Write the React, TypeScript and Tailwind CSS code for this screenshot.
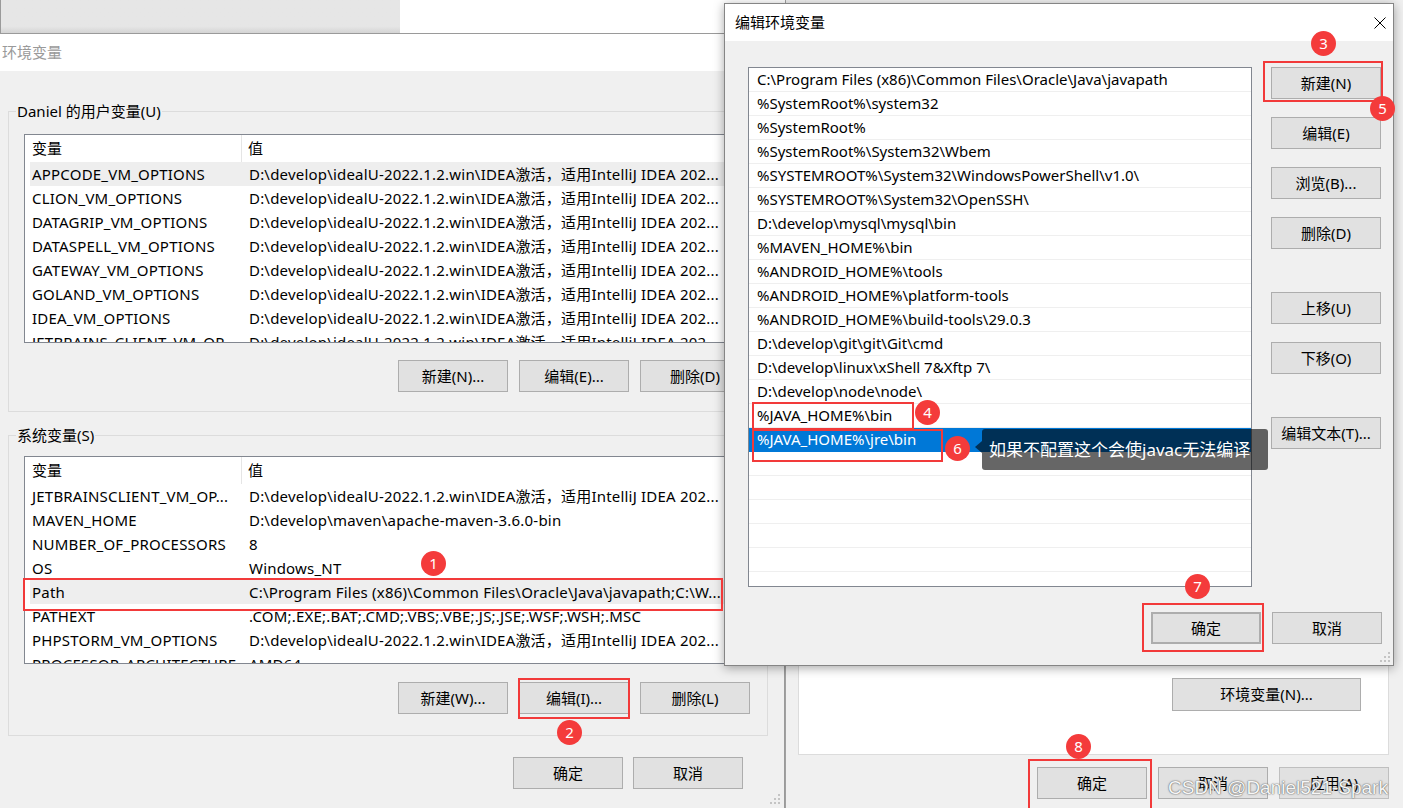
import React from "react";

const userVars: [string, string][] = [
  ["APPCODE_VM_OPTIONS", "D:\\develop\\idealU-2022.1.2.win\\IDEA激活，适用IntelliJ IDEA 202..."],
  ["CLION_VM_OPTIONS", "D:\\develop\\idealU-2022.1.2.win\\IDEA激活，适用IntelliJ IDEA 202..."],
  ["DATAGRIP_VM_OPTIONS", "D:\\develop\\idealU-2022.1.2.win\\IDEA激活，适用IntelliJ IDEA 202..."],
  ["DATASPELL_VM_OPTIONS", "D:\\develop\\idealU-2022.1.2.win\\IDEA激活，适用IntelliJ IDEA 202..."],
  ["GATEWAY_VM_OPTIONS", "D:\\develop\\idealU-2022.1.2.win\\IDEA激活，适用IntelliJ IDEA 202..."],
  ["GOLAND_VM_OPTIONS", "D:\\develop\\idealU-2022.1.2.win\\IDEA激活，适用IntelliJ IDEA 202..."],
  ["IDEA_VM_OPTIONS", "D:\\develop\\idealU-2022.1.2.win\\IDEA激活，适用IntelliJ IDEA 202..."],
  ["JETBRAINS_CLIENT_VM_OP...", "D:\\develop\\idealU-2022.1.2.win\\IDEA激活，适用IntelliJ IDEA 202..."],
];

const sysVars: [string, string][] = [
  ["JETBRAINSCLIENT_VM_OP...", "D:\\develop\\idealU-2022.1.2.win\\IDEA激活，适用IntelliJ IDEA 202..."],
  ["MAVEN_HOME", "D:\\develop\\maven\\apache-maven-3.6.0-bin"],
  ["NUMBER_OF_PROCESSORS", "8"],
  ["OS", "Windows_NT"],
  ["Path", "C:\\Program Files (x86)\\Common Files\\Oracle\\Java\\javapath;C:\\W..."],
  ["PATHEXT", ".COM;.EXE;.BAT;.CMD;.VBS;.VBE;.JS;.JSE;.WSF;.WSH;.MSC"],
  ["PHPSTORM_VM_OPTIONS", "D:\\develop\\idealU-2022.1.2.win\\IDEA激活，适用IntelliJ IDEA 202..."],
  ["PROCESSOR_ARCHITECTURE", "AMD64"],
];

const paths = [
  "C:\\Program Files (x86)\\Common Files\\Oracle\\Java\\javapath",
  "%SystemRoot%\\system32",
  "%SystemRoot%",
  "%SystemRoot%\\System32\\Wbem",
  "%SYSTEMROOT%\\System32\\WindowsPowerShell\\v1.0\\",
  "%SYSTEMROOT%\\System32\\OpenSSH\\",
  "D:\\develop\\mysql\\mysql\\bin",
  "%MAVEN_HOME%\\bin",
  "%ANDROID_HOME%\\tools",
  "%ANDROID_HOME%\\platform-tools",
  "%ANDROID_HOME%\\build-tools\\29.0.3",
  "D:\\develop\\git\\git\\Git\\cmd",
  "D:\\develop\\linux\\xShell 7&Xftp 7\\",
  "D:\\develop\\node\\node\\",
  "%JAVA_HOME%\\bin",
  "%JAVA_HOME%\\jre\\bin",
  "",
  "",
  "",
  "",
  "",
  "",
];

const Btn = ({
  children,
  className = "",
}: {
  children: React.ReactNode;
  className?: string;
}) => (
  <button
    type="button"
    className={`flex h-[32px] w-[110px] shrink-0 items-center justify-center border border-[#adadad] bg-[#e1e1e1] text-[15px] text-black ${className}`}
  >
    {children}
  </button>
);

const VarTable = ({
  rows,
  selected,
  className,
}: {
  rows: [string, string][];
  selected: number;
  className: string;
}) => (
  <div
    className={`ml-[15px] w-[730px] overflow-hidden border border-[#828790] bg-white ${className}`}
  >
    <div className="flex h-[27px] items-center">
      <div className="h-full w-[217px] shrink-0 border-r border-[#e5e5e5] pl-[7px] leading-[27px]">
        变量
      </div>
      <div className="pl-[6px]">值</div>
    </div>
    <div className="pl-[5px]">
      {rows.map(([k, v], i) => (
        <div
          key={k}
          className={`flex h-[24px] items-center whitespace-nowrap ${
            i === selected ? "bg-[#eeeeee]" : ""
          }`}
        >
          <div className="w-[212px] shrink-0 overflow-hidden pl-[2px] tracking-[0.2px]">{k}</div>
          <div className="pl-[7px] tracking-[0.2px]">{v}</div>
        </div>
      ))}
    </div>
  </div>
);

const Grip = () => (
  <svg width="11" height="11" viewBox="0 0 11 11">
    <rect x="8" y="0" width="2" height="2" fill="#c4c4c4" />
    <rect x="4" y="4" width="2" height="2" fill="#c4c4c4" />
    <rect x="8" y="4" width="2" height="2" fill="#c4c4c4" />
    <rect x="0" y="8" width="2" height="2" fill="#c4c4c4" />
    <rect x="4" y="8" width="2" height="2" fill="#c4c4c4" />
    <rect x="8" y="8" width="2" height="2" fill="#c4c4c4" />
  </svg>
);

const Badge = ({ n, className }: { n: number; className: string }) => (
  <div
    className={`absolute flex h-[25px] w-[25px] items-center justify-center rounded-full bg-[#f43b3b] text-[15px] leading-none text-white ${className}`}
  >
    {n}
  </div>
);

const Mark = ({ className }: { className: string }) => (
  <div className={`absolute border-2 border-[#f23a3a] ${className}`} />
);

export default function App() {
  return (
    <div className="relative h-[808px] w-[1403px] overflow-hidden bg-white font-['Noto_Sans','Noto_Sans_CJK_SC',sans-serif] text-[15px] text-black">
      {/* window behind, top left */}
      <div className="absolute left-0 top-0 h-[34px] w-[400px] border-b border-l border-[#9a9a9a] bg-gradient-to-b from-[#e6e6e6] from-80% to-[#d4d4d4]" />

      {/* 环境变量 dialog */}
      <div className="absolute left-0 top-[33px] flex h-[775px] w-[785px] flex-col border-r border-t border-[#9a9a9a] bg-[#f0f0f0]">
        <div className="h-[37px] shrink-0 bg-white pl-[2px] leading-[37px] text-[#9a9a9a]">
          环境变量
        </div>
        <div className="flex flex-col pl-[8px]">
          <fieldset className="mt-[30px] w-[760px] border border-[#dcdcdc] pb-[19px]">
            <legend className="ml-[7px] px-[1px] leading-[20px]">Daniel 的用户变量(U)</legend>
            <VarTable rows={userVars} selected={0} className="mt-[13px] h-[209px]" />
            <div className="mt-[17px] flex justify-end gap-[11px] pr-[17px]">
              <Btn>新建(N)...</Btn>
              <Btn>编辑(E)...</Btn>
              <Btn>删除(D)</Btn>
            </div>
          </fieldset>
          <fieldset className="mt-[13px] w-[760px] border border-[#dcdcdc] pb-[21px]">
            <legend className="ml-[7px] px-[1px] leading-[20px]">系统变量(S)</legend>
            <VarTable rows={sysVars} selected={4} className="mt-[11px] h-[208px]" />
            <div className="mt-[18px] flex justify-end gap-[11px] pr-[17px]">
              <Btn>新建(W)...</Btn>
              <Btn>编辑(I)...</Btn>
              <Btn>删除(L)</Btn>
            </div>
          </fieldset>
        </div>
        <div className="mt-[21px] flex justify-end gap-[10px] pr-[41px]">
          <Btn>确定</Btn>
          <Btn>取消</Btn>
        </div>
        <div className="absolute bottom-[3px] right-[3px]">
          <Grip />
        </div>
      </div>

      {/* 系统属性 window behind */}
      <div className="absolute left-[785px] top-0 flex h-[808px] w-[618px] flex-col border-l border-[#a0a0a0] bg-[#f0f0f0]">
        <div className="ml-[12px] mt-[560px] flex h-[195px] w-[591px] justify-end border border-[#dcdcdc] bg-white pr-[27px] pt-[117px]">
          <button
            type="button"
            className="flex h-[33px] w-[189px] items-center justify-center border border-[#adadad] bg-[#e1e1e1]"
          >
            环境变量(N)...
          </button>
        </div>
        <div className="mt-[12px] flex justify-end gap-[11px] pr-[14px]">
          <Btn>确定</Btn>
          <Btn>取消</Btn>
          <Btn className="border-[#bfbfbf] bg-[#cccccc] text-[#8a8a8a]">应用(A)</Btn>
        </div>
      </div>

      {/* 编辑环境变量 dialog */}
      <div className="absolute left-[724px] top-[3px] flex h-[663px] w-[670px] flex-col border border-[#858585] bg-[#f0f0f0] shadow-[0_2px_10px_rgba(0,0,0,0.35)]">
        <div className="flex h-[37px] shrink-0 items-center justify-between bg-white pl-[10px] pr-[7px]">
          <span>编辑环境变量</span>
          <svg width="12" height="12" viewBox="0 0 12 12">
            <path d="M0.5 0.5 L11.5 11.5 M11.5 0.5 L0.5 11.5" stroke="#000" strokeWidth="1" />
          </svg>
        </div>
        <div className="flex">
          <div className="ml-[23px] mt-[26px] h-[520px] w-[504px] overflow-hidden border border-[#828790] bg-white">
            {paths.map((p, i) => (
              <div
                key={i}
                className={`flex h-[24px] items-center whitespace-nowrap border-b pl-[8px] ${
                  i === 15
                    ? "border-[#0078d7] bg-[#0078d7] text-white"
                    : "border-[#efefef]"
                }`}
              >
                {p}
              </div>
            ))}
          </div>
          <div className="ml-[19px] mt-[26px] flex flex-col">
            <Btn>新建(N)</Btn>
            <Btn className="mt-[18px]">编辑(E)</Btn>
            <Btn className="mt-[18px]">浏览(B)...</Btn>
            <Btn className="mt-[18px]">删除(D)</Btn>
            <Btn className="mt-[43px]">上移(U)</Btn>
            <Btn className="mt-[18px]">下移(O)</Btn>
            <Btn className="mt-[43px]">编辑文本(T)...</Btn>
          </div>
        </div>
        <div className="mt-[25px] flex justify-end gap-[11px] pr-[11px]">
          <Btn className="border-2 border-[#0078d7]">确定</Btn>
          <Btn>取消</Btn>
        </div>
        <div className="absolute bottom-[2px] right-[2px]">
          <Grip />
        </div>
      </div>

      {/* tooltip */}
      <div className="absolute left-[982px] top-[429px] flex h-[41px] w-[286px] items-center rounded-[3px] bg-black/60 pl-[7px] text-[17px] text-white">
        <div className="absolute -left-[7px] top-[12px] h-0 w-0 border-y-[6px] border-r-[7px] border-y-transparent border-r-black/60" />
        如果不配置这个会使javac无法编译
      </div>

      {/* annotations */}
      <Mark className="left-[23px] top-[578px] h-[33px] w-[700px]" />
      <Mark className="left-[518px] top-[678px] h-[41px] w-[112px]" />
      <Mark className="left-[1263px] top-[61px] h-[41px] w-[120px]" />
      <Mark className="left-[752px] top-[402px] h-[28px] w-[162px]" />
      <Mark className="left-[752px] top-[429px] h-[33px] w-[191px]" />
      <Mark className="left-[1142px] top-[603px] h-[49px] w-[122px]" />
      <Mark className="left-[1028px] top-[759px] h-[60px] w-[124px]" />

      <Badge n={1} className="left-[421px] top-[551px]" />
      <Badge n={2} className="left-[557px] top-[720px]" />
      <Badge n={3} className="left-[1311px] top-[31px]" />
      <Badge n={4} className="left-[915px] top-[400px]" />
      <Badge n={5} className="left-[1370px] top-[96px]" />
      <Badge n={6} className="left-[945px] top-[436px]" />
      <Badge n={7} className="left-[1185px] top-[574px]" />
      <Badge n={8} className="left-[1066px] top-[734px]" />

      {/* watermark */}
      <div className="absolute left-[1168px] top-[775px] font-['Liberation_Sans',sans-serif] text-[19px] leading-[26px] text-[#f6f6f6] [text-shadow:0_0_1px_#555,0_0_2px_#777]">
        CSDN @Daniel521-Spark
      </div>
    </div>
  );
}
